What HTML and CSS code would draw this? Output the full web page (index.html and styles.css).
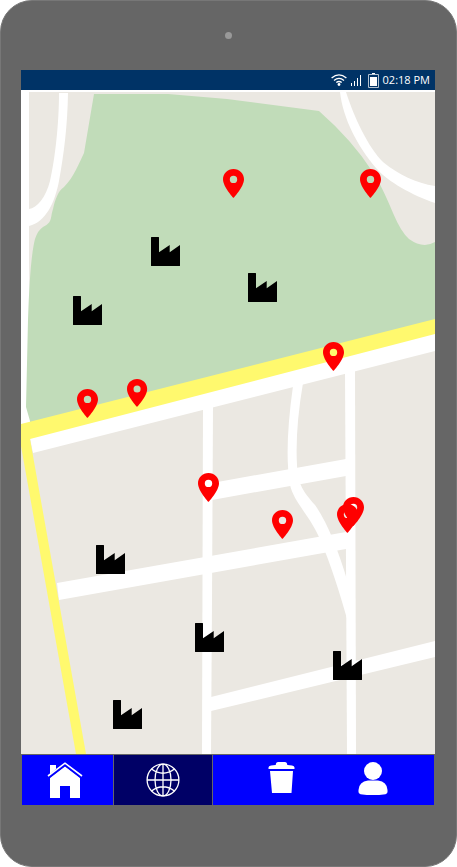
FILE: index.html
```html
<!DOCTYPE html>
<html lang="en">
<head>
<meta charset="utf-8">
<meta name="viewport" content="width=device-width, initial-scale=1">
<title>Map</title>
<link rel="stylesheet" href="styles.css">
</head>
<body>
<div class="device">
  <div class="bezel"><span class="camera"></span></div>
  <div class="screen">
    <header class="status">
      <svg class="wifi" viewBox="0 0 16 12" aria-hidden="true">
        <path d="M.6 4.1Q8-2.4 15.4 4.1M3 6.5Q8 2.2 13 6.5M5.3 8.6Q8 6.4 10.7 8.6"/>
        <circle cx="8" cy="10.5" r="1.4"/>
      </svg>
      <svg class="signal" viewBox="0 0 11 12" aria-hidden="true">
        <path d="M.5 9V12M3.500 7V12M6.500 4V12M9.500 1V12"/>
      </svg>
      <svg class="battery" viewBox="0 0 11 15" aria-hidden="true">
        <path class="shell" d="M.5 1.500H10.500V14.500H.5Z"/>
        <path class="charge" d="M4 0H7V1H4ZM2 4H9V13H2Z"/>
      </svg>
      <time datetime="14:18">02:18 PM</time>
    </header>
    <main>
      <svg class="map" viewBox="21 92 414 662" role="img" aria-label="Map with places and factories">
        <defs>
          <path id="pin" fill-rule="evenodd" d="M10.500 0C4.700 0 0 4.500 0 10.300C0 18 10.500 29 10.500 29S21 18 21 10.300C21 4.500 16.300 0 10.500 0ZM10.500 6.700A3.700 3.700 0 1 1 10.500 14.100A3.700 3.700 0 1 1 10.500 6.700Z"/>
          <path id="factory" d="M.5 0H7.500Q8 0 8 .5V15.300L18.700 8V15.300L29 8V28.500Q29 29 28.500 29H.5Q0 29 0 28.500V.5Q0 0 .5 0Z"/>
        </defs>
        <rect class="land" x="21" y="92" width="414" height="662"/>
        <g class="road">
          <path d="M21 92H29V260L31 430H21Z"/>
          <path d="M59 93H68C67.500 125 64 154 59 181C55 202 46 222 29 226V209C37 208 46 197 50 181C55 160 59 124 59 93Z"/>
        </g>
        <path class="park" d="M94 94H168L227 99L319 111Q352 140 372 171Q381 184 393 213Q401 232 409 239Q423 249 435 242V325L30 425L30 421L26 407L28 320Q30 258 35 239Q38 230 43 227C53 222 50 218 53 209C55 200 58 191 64 187C74 177 79 163 84 153Z"/>
        <g class="road">
          <path d="M340 92H346C354 117 368 147 383 162C399 175 416 183 435 186V203C412 195 388 182 376 168C358 147 343 119 340 92Z"/>
          <path d="M30 438L435 333V351L33 453Z"/>
          <path d="M203 406L213 404L212 600L211 754H202Z"/>
          <path d="M345 370L355 368L356 754H347Z"/>
          <path d="M293 386L303 383Q295 430 297 465C298 486 304 492 315 505Q332 529 348 583V622C340 594 331 564 319 537C309 515 294 502 290 485Q284 450 293 386Z"/>
          <path d="M212 483L346 459V476L212 500Z"/>
          <path d="M57 583L346 532V549L59 600Z"/>
          <path d="M211 697L435 641V657L211 711Z"/>
        </g>
        <path class="highway" d="M21 424L435 319V334L30 439L86 754H76L21 446Z"/>
        <g class="factories">
          <use href="#factory" x="151" y="237"/>
          <use href="#factory" x="73" y="296"/>
          <use href="#factory" x="248" y="273"/>
          <use href="#factory" x="96" y="545"/>
          <use href="#factory" x="195" y="623"/>
          <use href="#factory" x="333" y="651"/>
          <use href="#factory" x="113" y="700"/>
        </g>
        <g class="pins">
          <use href="#pin" x="223" y="169"/>
          <use href="#pin" x="360" y="169"/>
          <use href="#pin" x="323" y="342"/>
          <use href="#pin" x="77" y="389"/>
          <use href="#pin" transform="translate(127 379) scale(.96)"/>
          <use href="#pin" x="198" y="473"/>
          <use href="#pin" x="272" y="510"/>
          <use href="#pin" x="343" y="497"/>
          <use href="#pin" x="337" y="504"/>
        </g>
      </svg>
    </main>
    <nav class="tabs" aria-label="Main">
      <button class="tab home" type="button" aria-label="Home">
        <svg width="36" height="36" viewBox="0 0 36 36" aria-hidden="true">
          <path fill="#fff" d="M3 3H9V7L3 12ZM3 16L18 4.500L33 16V36H23V24H13V36H3Z"/>
          <path fill="none" stroke="#00f" stroke-width="2" d="M1.500 15.500L18 2.800L34.500 15.500"/>
          <path fill="none" stroke="#fff" stroke-width="1.600" d="M1 14L18 1.200L35 14"/>
        </svg>
      </button>
      <button class="tab active" type="button" aria-label="Map" aria-current="page">
        <svg width="34" height="34" viewBox="0 0 34 34" aria-hidden="true">
          <g fill="none" stroke="#fff" stroke-width="1.300">
            <circle cx="17" cy="17" r="15.900"/>
            <ellipse cx="17" cy="17" rx="8" ry="15.900"/>
            <path d="M17 1V33M1 17H33M5.500 6Q17 14.500 28.500 6M5.500 28Q17 19.500 28.500 28"/>
          </g>
        </svg>
      </button>
      <div class="tools">
        <button class="tab" type="button" aria-label="Delete">
          <svg width="27" height="36" viewBox="0 0 27 36" aria-hidden="true">
            <path fill="#fff" d="M.5 7V5.500Q.5 4 3 3.500L7.500 3Q8 2.800 8 1.500Q8.300 0 10 0H17Q18.700 0 19 1.500Q19 2.800 19.500 3L24 3.500Q26.500 4 26.500 5.500V7ZM2 9H25L23.500 31H4Z"/>
          </svg>
        </button>
        <button class="tab" type="button" aria-label="Profile">
          <svg width="30" height="36" viewBox="0 0 30 36" aria-hidden="true">
            <g fill="#fff">
              <circle cx="15" cy="9" r="9"/>
              <path d="M10 18.500H20Q29 19.500 29.500 28V30Q29.500 31.500 27.500 32.200Q15 34 2.500 32.200Q.5 31.500 .5 30V28Q1 19.500 10 18.500Z"/>
            </g>
          </svg>
        </button>
      </div>
    </nav>
  </div>
</div>
</body>
</html>
```
FILE: styles.css
```css
* {
  box-sizing: border-box;
}

body {
  margin: 0;
  background: #fff;
  font-family: "Open Sans", "Noto Sans", sans-serif;
}

.device {
  min-height: 100vh;
  padding: 0 21px 0 20px;
  border: 1px solid #777;
  border-radius: 32px;
  background: #666;
}

.bezel {
  display: flex;
  align-items: center;
  justify-content: center;
  height: 69px;
}

.camera {
  width: 7px;
  height: 7px;
  border-radius: 50%;
  background: #999;
}

.status {
  display: flex;
  align-items: center;
  justify-content: flex-end;
  height: 22px;
  padding-right: 5px;
  border-bottom: 2px solid #fff;
  background: #036;
  color: #fff;
  font-size: 11px;
  line-height: 20px;
}

.wifi {
  width: 16px;
  height: 12px;
  margin-right: 4px;
  fill: #fff;
}

.wifi path {
  fill: none;
  stroke: #fff;
  stroke-width: 1.3;
}

.signal {
  width: 11px;
  height: 12px;
  margin-right: 6px;
  stroke: #fff;
}

.battery {
  width: 11px;
  height: 15px;
  margin-right: 4px;
}

.shell {
  fill: none;
  stroke: #b3c2d1;
}

.charge {
  fill: #fff;
}

.map {
  display: block;
  width: 100%;
}

.land {
  fill: #ebe8e2;
}

.park {
  fill: #c1dcb9;
}

.road {
  fill: #fff;
}

.highway {
  fill: #fff96e;
}

.factories {
  fill: #000;
}

.pins {
  fill: #f00;
}

.tabs {
  display: grid;
  grid-template-columns: 91fr 98fr 221fr;
  gap: 1px;
  padding: 1px 1px 0;
}

.tab {
  display: flex;
  align-items: center;
  justify-content: center;
  height: 50px;
  padding: 0;
  border: 0;
  background: #00f;
}

.home {
  padding-right: 5px;
}

.active {
  background: #006;
}

.tools {
  display: grid;
  grid-template-columns: 1fr 1fr;
  padding: 0 16px 0 23px;
  background: #00f;
}
```
